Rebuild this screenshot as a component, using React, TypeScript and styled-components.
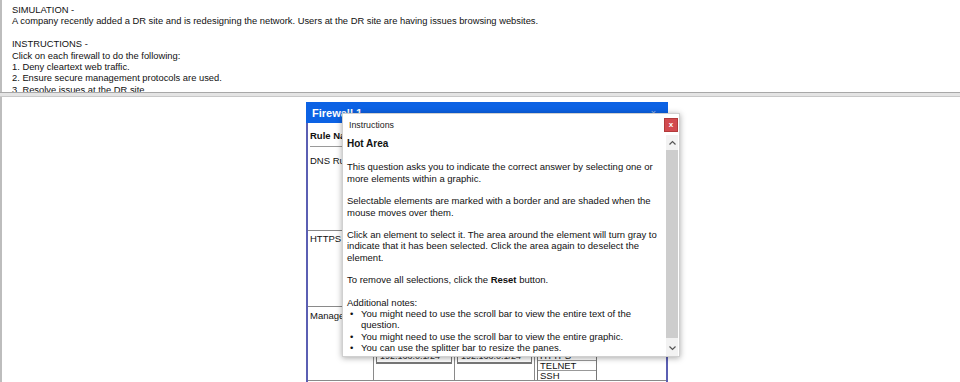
import * as React from 'react';
import styled, { createGlobalStyle } from 'styled-components';

const GlobalStyle = createGlobalStyle`
  html, body {
    margin: 0;
    padding: 0;
    background: #ffffff;
  }
  body {
    font-family: "Liberation Sans", Arial, sans-serif;
    color: #000000;
  }
`;

const Page = styled.div`
  width: 960px;
  height: 382px;
  display: flex;
  flex-direction: column;
  overflow: hidden;
`;

const TopPane = styled.div`
  height: 92px;
  box-sizing: border-box;
  border-left: 2px solid #bdbdbd;
  padding: 5px 0 0 10px;
  font-size: 9.35px;
  line-height: 11.4px;
  color: #111;
  overflow: hidden;
`;

const Line = styled.div<{ $gap?: boolean }>`
  margin-top: ${(p) => (p.$gap ? '11.4px' : '0')};
  white-space: nowrap;
`;

const Splitter = styled.div`
  height: 3px;
  border-top: 1px solid #a8a8a8;
  border-bottom: 1px solid #c8c8c8;
  background: #e4e4e4;
`;

const BottomPane = styled.div`
  position: relative;
  flex: 1;
  border-left: 2px solid #bdbdbd;
`;

const FirewallWindow = styled.div`
  position: absolute;
  left: 304px;
  top: 5px;
  width: 362px;
  height: 300px;
  box-sizing: border-box;
  border: 2px solid #5b5fb3;
  border-top: none;
  background: #fff;
  display: flex;
  flex-direction: column;
`;

const TitleBar = styled.div`
  height: 21px;
  margin: 0 -2px;
  background: #0c62e4;
  color: #fff;
  font-weight: bold;
  font-size: 11px;
  display: flex;
  align-items: center;
  justify-content: space-between;
  padding: 0 12px 0 6px;
`;

const TitleClose = styled.span`
  font-size: 9px;
  color: #a8c0e8;
  font-weight: normal;
`;

const RuleTable = styled.div`
  display: grid;
  grid-template-columns: 66px 81px 80px 1fr;
  grid-template-rows: 22px 84px 76px 74px;
  margin-top: 2px;
  font-size: 9.5px;
  color: #111;
`;

const HeadCell = styled.div`
  grid-column: 1 / -1;
  border-bottom: 1px solid #9a9a9a;
  margin: 0 4px 0 2px;
  padding: 5px 0 0 0;
  font-weight: bold;
`;

const Cell = styled.div<{ $pad?: number; $last?: boolean }>`
  border-bottom: 1px solid #8a8a8a;
  border-right: ${(p) => (p.$last ? 'none' : '1px solid #8a8a8a')};
  padding: ${(p) => (p.$pad !== undefined ? `${p.$pad}px 0 0 2px` : '0')};
  white-space: nowrap;
  overflow: hidden;
  display: flex;
  flex-direction: column;
  justify-content: flex-start;
`;

const AddrBox = styled.div`
  margin: 43px 2px 0 2px;
  height: 11px;
  border: 1px solid #777;
  border-bottom-width: 2px;
  font-size: 9px;
  line-height: 11px;
  padding-left: 3px;
  color: #333;
`;

const ProtoList = styled.div`
  margin: 43px 0 0 2px;
  width: 58px;
  border: 1px solid #777;
  font-size: 9.5px;
  line-height: 9px;
`;

const ProtoItem = styled.div`
  border-top: 1px solid #999;
  padding-left: 2px;
  height: 9px;
  &:first-child {
    border-top: none;
  }
`;

const Dialog = styled.div`
  position: absolute;
  left: 340px;
  top: 16px;
  width: 338px;
  height: 244px;
  box-sizing: border-box;
  background: #fff;
  border: 1px solid #d0d0d0;
  box-shadow: 0 1px 6px rgba(0, 0, 0, 0.35);
  display: flex;
  flex-direction: column;
`;

const DialogHeader = styled.div`
  height: 21px;
  display: flex;
  align-items: center;
  justify-content: space-between;
  padding: 0 1px 0 6px;
  font-size: 8.8px;
  color: #222;
`;

const CloseButton = styled.button`
  width: 14px;
  height: 14px;
  padding: 0;
  border: 1px solid #b23a3a;
  background: #d24a4f;
  color: #fff;
  font-size: 8px;
  line-height: 10px;
  font-family: "Liberation Sans", Arial, sans-serif;
  font-weight: bold;
  cursor: pointer;
`;

const DialogBody = styled.div`
  flex: 1;
  display: flex;
  min-height: 0;
`;

const BodyText = styled.div`
  flex: 1;
  padding: 0 0 0 4px;
  font-size: 9.5px;
  line-height: 11.4px;
  color: #111;
  overflow: hidden;
`;

const Heading = styled.div`
  font-weight: bold;
  font-size: 10px;
  margin: 3px 0 12px 0;
`;

const Para = styled.p`
  margin: 0 0 11px 0;
`;

const Notes = styled.ul`
  margin: 0;
  padding: 0;
  list-style: none;
`;

const Note = styled.li`
  position: relative;
  padding-left: 14px;
  &::before {
    content: '•';
    position: absolute;
    left: 3px;
    top: 0;
  }
`;

const ScrollBar = styled.div`
  width: 12px;
  margin-right: 1px;
  display: flex;
  flex-direction: column;
  background: #f2f2f2;
`;

const ScrollArrow = styled.div`
  height: 15px;
  display: flex;
  align-items: center;
  justify-content: center;
`;

const ScrollThumb = styled.div`
  flex: 1;
  background: #cdcdcd;
  margin: 0 0 3px 0;
`;

const Arrow = ({ up }: { up?: boolean }) => (
  <svg width="7" height="5" viewBox="0 0 7 5">
    <path
      d={up ? 'M0.5 4.5 L3.5 1.5 L6.5 4.5' : 'M0.5 0.5 L3.5 3.5 L6.5 0.5'}
      fill="none"
      stroke="#555"
      strokeWidth="1.2"
    />
  </svg>
);

const App = () => (
  <Page>
    <GlobalStyle />
    <TopPane>
      <Line>SIMULATION -</Line>
      <Line>A company recently added a DR site and is redesigning the network. Users at the DR site are having issues browsing websites.</Line>
      <Line $gap>INSTRUCTIONS -</Line>
      <Line>Click on each firewall to do the following:</Line>
      <Line>1. Deny cleartext web traffic.</Line>
      <Line>2. Ensure secure management protocols are used.</Line>
      <Line>3. Resolve issues at the DR site.</Line>
    </TopPane>
    <Splitter />
    <BottomPane>
      <FirewallWindow>
        <TitleBar>
          <span>Firewall 1</span>
          <TitleClose>×</TitleClose>
        </TitleBar>
        <RuleTable>
          <HeadCell>Rule Name</HeadCell>
          <Cell $pad={8}>DNS Rule</Cell>
          <Cell />
          <Cell />
          <Cell $last />
          <Cell $pad={2}>HTTPS Outbound</Cell>
          <Cell />
          <Cell />
          <Cell $last />
          <Cell $pad={3}>Management</Cell>
          <Cell>
            <AddrBox>192.168.0.1/24</AddrBox>
          </Cell>
          <Cell>
            <AddrBox>192.168.0.1/24</AddrBox>
          </Cell>
          <Cell $last>
            <ProtoList>
              <ProtoItem>HTTPS</ProtoItem>
              <ProtoItem>TELNET</ProtoItem>
              <ProtoItem>SSH</ProtoItem>
            </ProtoList>
          </Cell>
        </RuleTable>
      </FirewallWindow>
      <Dialog>
        <DialogHeader>
          <span>Instructions</span>
          <CloseButton>x</CloseButton>
        </DialogHeader>
        <DialogBody>
          <BodyText>
            <Heading>Hot Area</Heading>
            <Para>This question asks you to indicate the correct answer by selecting one or more elements within a graphic.</Para>
            <Para>Selectable elements are marked with a border and are shaded when the mouse moves over them.</Para>
            <Para>Click an element to select it. The area around the element will turn gray to indicate that it has been selected. Click the area again to deselect the element.</Para>
            <Para>
              To remove all selections, click the <b>Reset</b> button.
            </Para>
            <div>Additional notes:</div>
            <Notes>
              <Note>You might need to use the scroll bar to view the entire text of the question.</Note>
              <Note>You might need to use the scroll bar to view the entire graphic.</Note>
              <Note>You can use the splitter bar to resize the panes.</Note>
            </Notes>
          </BodyText>
          <ScrollBar>
            <ScrollArrow>
              <Arrow up />
            </ScrollArrow>
            <ScrollThumb />
            <ScrollArrow>
              <Arrow />
            </ScrollArrow>
          </ScrollBar>
        </DialogBody>
      </Dialog>
    </BottomPane>
  </Page>
);

export default App;
